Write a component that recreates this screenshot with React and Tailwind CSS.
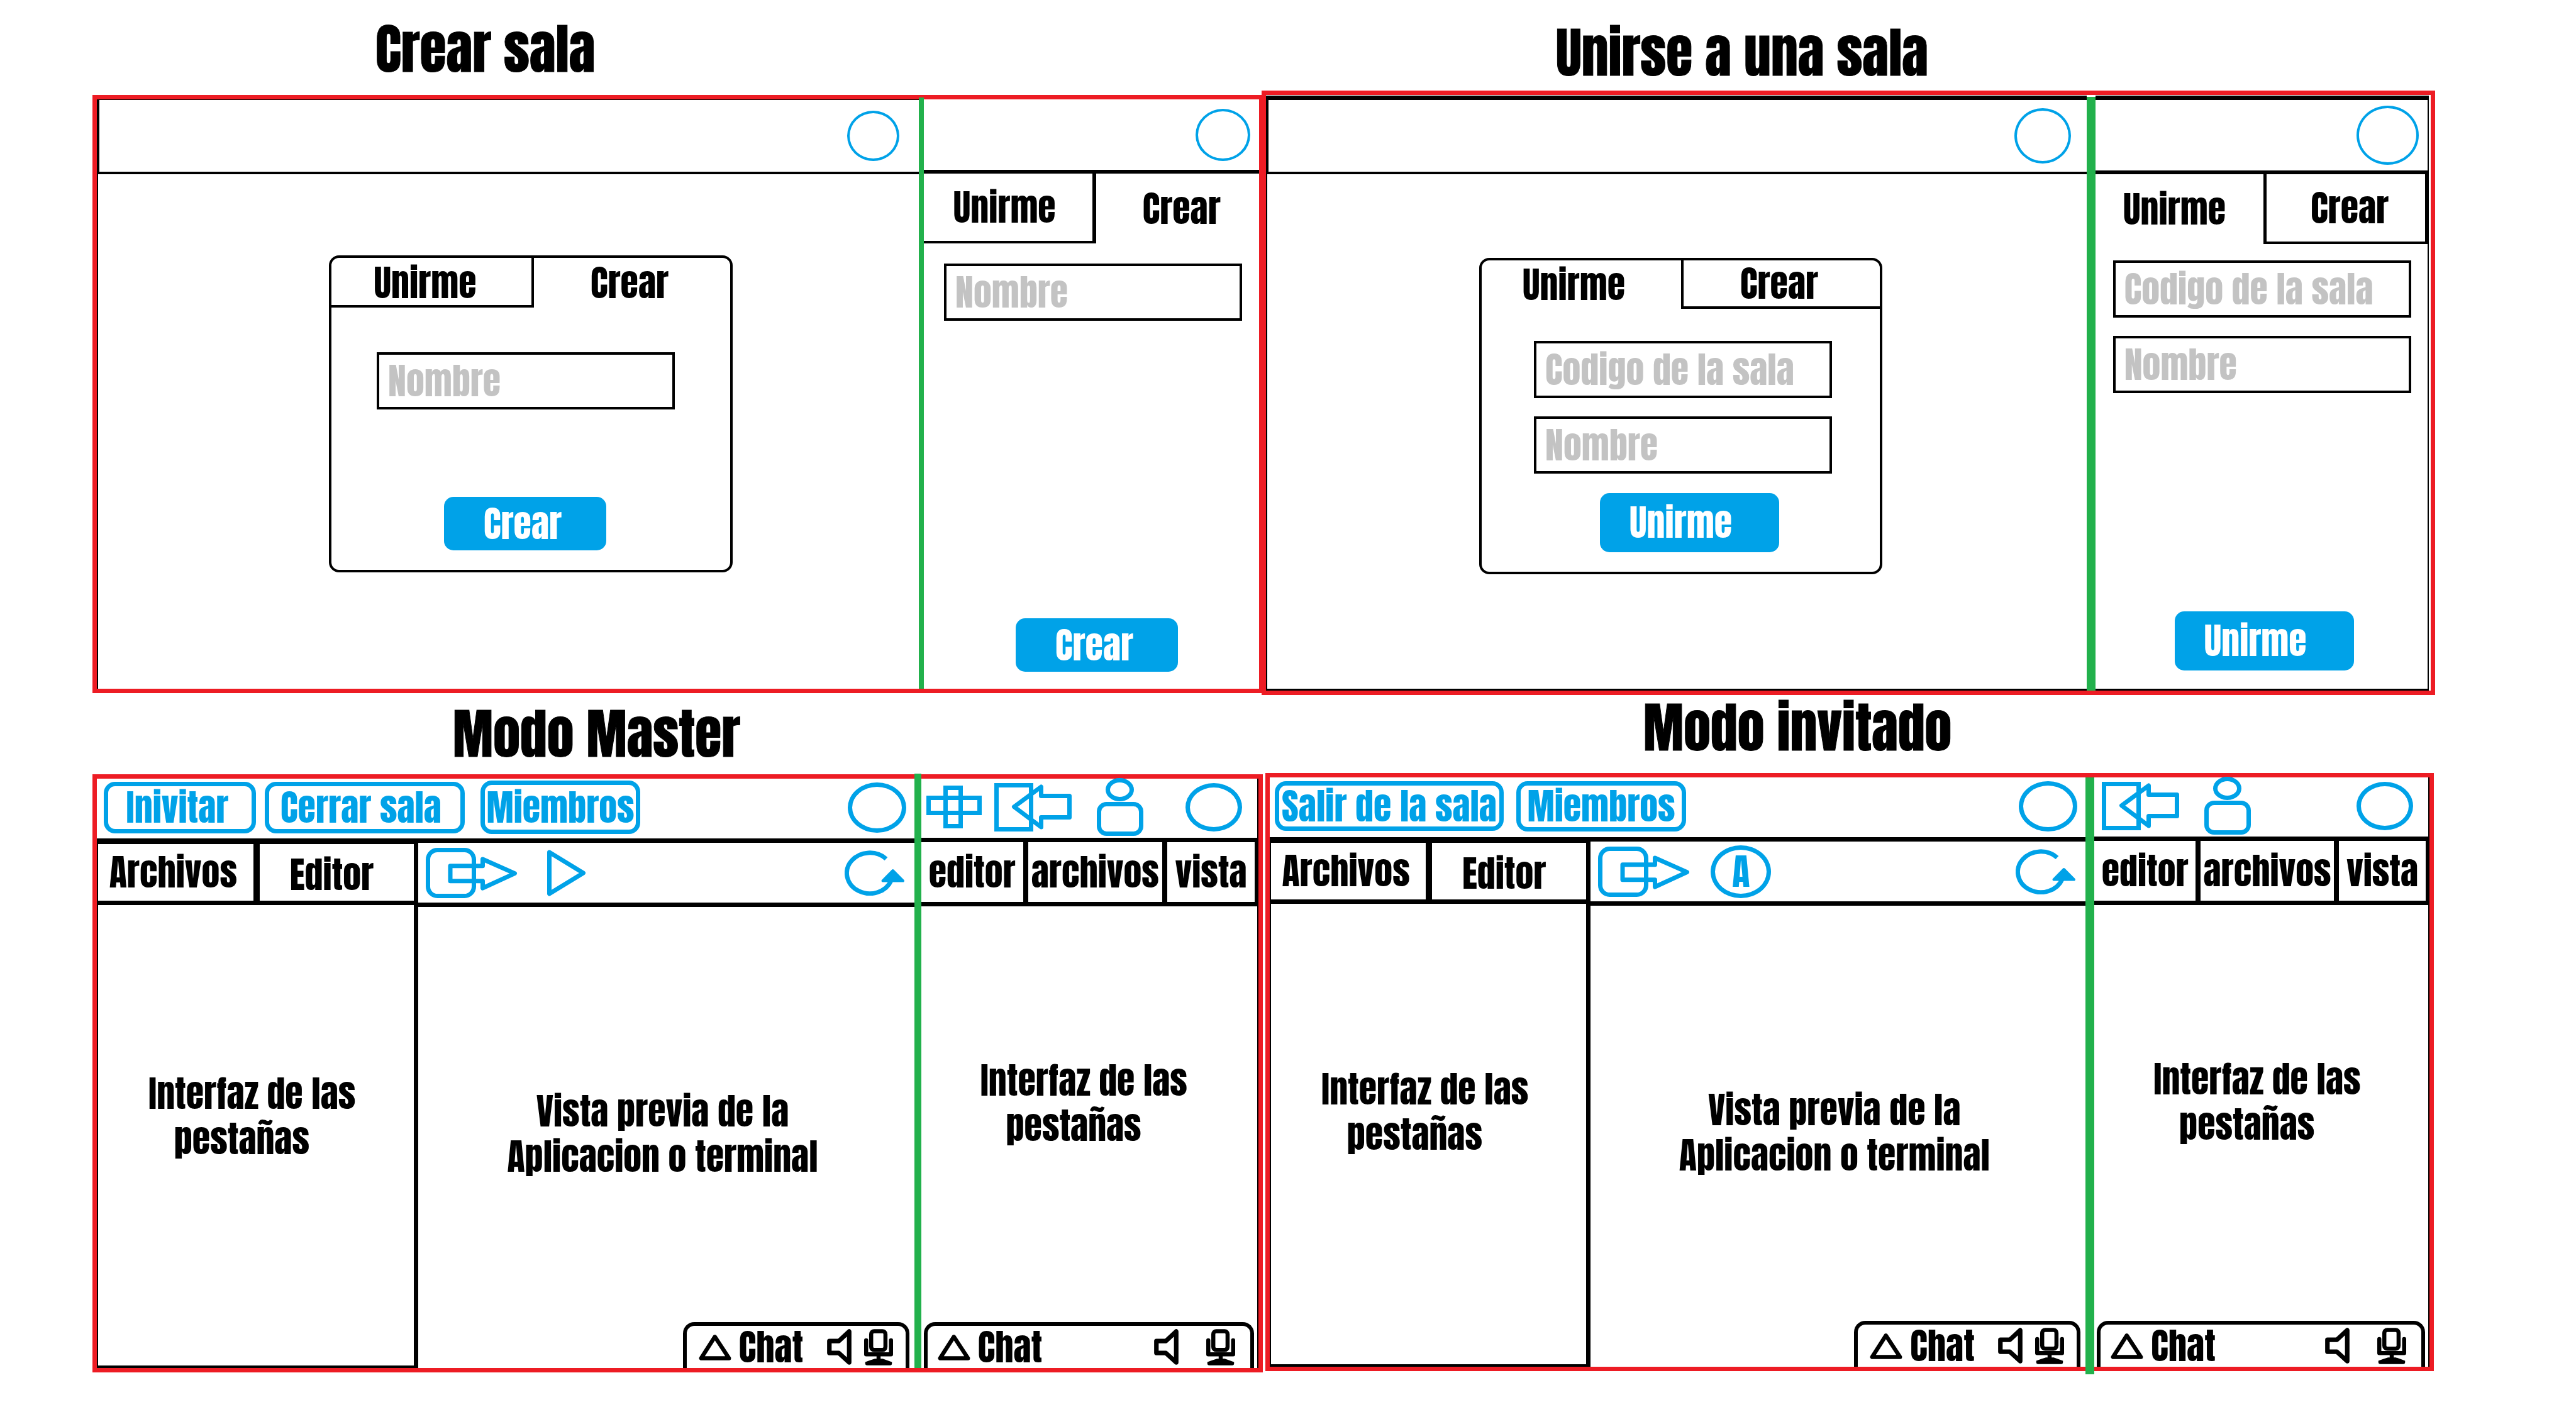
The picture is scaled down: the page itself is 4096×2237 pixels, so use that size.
const STROKE = { fill: 'none', stroke: 'currentColor', strokeWidth: 7, strokeLinejoin: 'round' };

function PlusIcon() {
  return (
    <svg viewBox="0 0 88 68" className="h-[68px] w-[88px]" {...STROKE} strokeLinejoin="miter" aria-hidden="true">
      <rect x="30.5" y="3.5" width="24" height="61" />
      <rect x="3.5" y="19.5" width="81" height="24" />
    </svg>
  );
}

function EnterIcon() {
  return (
    <svg viewBox="0 0 123 77" className="h-[77px] w-[123px]" {...STROKE} aria-hidden="true">
      <rect x="3.5" y="3.5" width="55" height="70" strokeLinejoin="miter" />
      <path d="M31.5 37.7L74.5 6V20.5H119.5V54.5H74.5V70Z" />
    </svg>
  );
}

function PersonIcon() {
  return (
    <svg viewBox="0 0 74 92" className="h-[92px] w-[74px]" {...STROKE} aria-hidden="true">
      <ellipse cx="36.5" cy="18.5" rx="19" ry="15" />
      <rect x="3.5" y="41.5" width="67" height="47" rx="12" />
    </svg>
  );
}

function ExportIcon() {
  return (
    <svg viewBox="0 0 146 80" className="h-[80px] w-[146px]" {...STROKE} aria-hidden="true">
      <rect x="3.5" y="3.5" width="73" height="73" rx="15" />
      <path d="M39 28.7H90.5V18L141.5 40.6L90.5 64V52.8H39Z" />
    </svg>
  );
}

function PlayIcon() {
  return (
    <svg viewBox="0 0 62 78" className="h-[78px] w-[62px]" {...STROKE} aria-hidden="true">
      <path d="M3.5 6L57.5 39L3.5 72Z" />
    </svg>
  );
}

function RefreshIcon() {
  return (
    <svg viewBox="0 0 96 72" className="h-[72px] w-[96px]" {...STROKE} aria-hidden="true">
      <path d="M66 13.5A36.5 32.4 0 1 0 74 48" />
      <path d="M76.7 32L93 48.5H60.5Z" fill="currentColor" strokeWidth="4" />
    </svg>
  );
}

function TriangleIcon() {
  return (
    <svg viewBox="0 0 176 141" className="h-[42px] w-[52px]" {...STROKE} strokeWidth="22" aria-hidden="true">
      <path d="M87 14L13 130H163Z" />
    </svg>
  );
}

function SpeakerIcon() {
  return (
    <svg viewBox="0 0 129 190" className="h-[57px] w-[39px]" {...STROKE} strokeWidth="24" aria-hidden="true">
      <path d="M12 64H62L117 13V177L62 127H12Z" />
    </svg>
  );
}

function MicIcon() {
  return (
    <svg viewBox="0 0 156 195" className="h-[58px] w-[46px]" {...STROKE} strokeWidth="22" aria-hidden="true">
      <rect x="38" y="11" width="77" height="101" rx="16" />
      <path d="M11 60V136H145V60" strokeLinecap="round" />
      <path d="M78 136V170" />
      <path
        d="M17 195H140Q150 195 150 184V177Q120 166 100 159H58Q35 166 6 177V184Q6 195 17 195Z"
        fill="currentColor"
        stroke="none"
      />
    </svg>
  );
}

function IconButton({ label, className = '', children }) {
  return (
    <button type="button" aria-label={label} className={`shrink-0 text-[#00a2e8] ${className}`}>
      {children}
    </button>
  );
}

function Avatar({ className }) {
  return <button type="button" aria-label="Perfil" className={`shrink-0 rounded-[50%] border-[#00a2e8] ${className}`} />;
}

function Tab({ className = '', children }) {
  return (
    <button type="button" role="tab" className={`flex min-w-0 items-center justify-center whitespace-nowrap border-black ${className}`}>
      {children}
    </button>
  );
}

function Field({ label, className = '' }) {
  return (
    <input
      type="text"
      aria-label={label}
      placeholder={label}
      className={`block h-[91px] w-[474px] border-4 border-black bg-white px-[14px] placeholder:text-[#c3c3c3] placeholder:opacity-100 ${className}`}
    />
  );
}

function Primary({ className = '', children }) {
  return (
    <button type="button" className={`block rounded-[15px] bg-[#00a2e8] text-white ${className}`}>
      {children}
    </button>
  );
}

function Outlined({ className = '', children }) {
  return (
    <button
      type="button"
      className={`flex shrink-0 items-center justify-center whitespace-nowrap rounded-[18px] border-[7px] border-[#00a2e8] text-[#00a2e8] ${className}`}
    >
      {children}
    </button>
  );
}

function Title({ className, children }) {
  return (
    <h2 className={`flex items-center text-[86px] leading-none [-webkit-text-stroke:1px_currentColor] ${className}`}>
      {children}
    </h2>
  );
}

function CreateRoom() {
  return (
    <section className="grid grid-cols-[1307fr_8px_533fr] border-[7px] border-r-4 border-[#ed1c24]">
      <div className="border-l-2 border-t border-black">
        <header className="flex h-[118px] items-center justify-end border-b-4 border-l-2 border-black pr-[31px]">
          <Avatar className="h-20 w-[83px] border-4" />
        </header>
        <form className="ml-[367px] mt-[129px] w-[642px] rounded-[16px] border-4 border-black pb-[31px]">
          <div role="tablist" className="flex h-[79px]">
            <Tab className="w-[322px] border-b-4 border-r-4 pr-5 pt-1">Unirme</Tab>
            <Tab className="flex-1 pr-2">Crear</Tab>
          </div>
          <Field label="Nombre" className="ml-[72px] mt-[71px]" />
          <Primary className="ml-[179px] mt-[139px] h-[85px] w-[258px] pr-2">Crear</Primary>
        </form>
      </div>
      <div className="-mt-[3px] bg-[#22b14c]" />
      <div className="flex flex-col">
        <header className="flex h-[118px] items-center justify-end border-b-[6px] border-black pr-[14px]">
          <Avatar className="h-[83px] w-[87px] border-4" />
        </header>
        <form className="flex flex-1 flex-col items-start pb-[27px]">
          <div role="tablist" className="flex h-[111px] w-full">
            <Tab className="flex-[258] border-b-4 border-r-[6px] pr-3">Unirme</Tab>
            <Tab className="flex-[248] pl-3">Crear</Tab>
          </div>
          <Field label="Nombre" className="ml-8 mt-8" />
          <Primary className="ml-[146px] mt-auto h-[85px] w-[258px] pr-2">Crear</Primary>
        </form>
      </div>
    </section>
  );
}

function JoinRoom() {
  return (
    <section className="grid grid-cols-[1304fr_14px_533fr] border-[7px] border-[#ed1c24]">
      <div className="mt-px border-b-[3px] border-l-2 border-t-[7px] border-black">
        <header className="flex h-[118px] items-center justify-end border-b-4 border-l-2 border-black pr-[25px]">
          <Avatar className="h-[88px] w-[90px] border-4" />
        </header>
        <form className="ml-[337px] mt-[133px] w-[641px] rounded-[16px] border-4 border-black pb-[31px]">
          <div role="tablist" className="flex h-[77px]">
            <Tab className="w-[317px] pr-6">Unirme</Tab>
            <Tab className="flex-1 border-b-4 border-l-4 pr-2">Crear</Tab>
          </div>
          <Field label="Codigo de la sala" className="ml-[83px] mt-[51px]" />
          <Field label="Nombre" className="ml-[83px] mt-[29px]" />
          <Primary className="ml-[188px] mt-[31px] h-[94px] w-[285px] pr-7">Unirme</Primary>
        </form>
      </div>
      <div className="mt-[3px] bg-[#22b14c]" />
      <div className="mr-[3px] mt-px flex flex-col border-b-[3px] border-r-2 border-t-[7px] border-black">
        <header className="flex h-[118px] items-center justify-end border-b-[6px] border-black pr-[14px]">
          <Avatar className="h-[94px] w-[99px] border-4" />
        </header>
        <form className="flex flex-1 flex-col items-start pb-[29px]">
          <div role="tablist" className="flex h-[111px] w-full">
            <Tab className="flex-[251] pr-4">Unirme</Tab>
            <Tab className="flex-[239] border-b-4 border-l-[5px] border-r-4 pl-3">Crear</Tab>
          </div>
          <Field label="Codigo de la sala" className="ml-7 mt-[26px]" />
          <Field label="Nombre" className="ml-7 mt-[29px]" />
          <Primary className="ml-[126px] mt-auto h-[94px] w-[285px] pr-7">Unirme</Primary>
        </form>
      </div>
    </section>
  );
}

function ChatBar({ className }) {
  return (
    <div className={`mt-auto flex h-[73px] items-center rounded-t-[18px] border-[6px] border-b-0 border-black ${className}`}>
      <button type="button" className="flex items-center gap-3">
        <TriangleIcon />
        Chat
      </button>
      <button type="button" aria-label="Sonido" className="ml-auto">
        <SpeakerIcon />
      </button>
      <button type="button" aria-label="Microfono">
        <MicIcon />
      </button>
    </div>
  );
}

function Workspace({ className, divider, actions, tools, mobileActions, asideText }) {
  return (
    <section className={`grid border-[7px] border-[#ed1c24] ${className}`}>
      <div className="flex flex-col">
        <header className="flex h-[95px] shrink-0 items-center pb-1 pr-[13px]">
          {actions}
          <Avatar className="ml-auto h-20 w-[93px] border-[7px]" />
        </header>
        <div className="grid flex-1 grid-cols-[511fr_788fr]">
          <aside className="flex flex-col border-b-4 border-l-2 border-r-[7px] border-black">
            <div role="tablist" className="flex h-[106px] border-b-[7px] border-t-[9px] border-black">
              <Tab className="flex-[238] border-r-[10px] pr-2">Archivos</Tab>
              <Tab className="flex-[229] pr-4 pt-2">Editor</Tab>
            </div>
            <p className={`whitespace-pre pl-[80px] leading-[72px] ${asideText}`}>{'Interfaz de las\n   pestañas'}</p>
          </aside>
          <main className="flex flex-col">
            <div className="flex h-[109px] shrink-0 items-center border-y-[7px] border-black pl-3 pr-[15px]">
              <IconButton label="Exportar">
                <ExportIcon />
              </IconButton>
              {tools}
              <IconButton label="Recargar" className="ml-auto">
                <RefreshIcon />
              </IconButton>
            </div>
            <p className="mt-[289px] pr-3 text-center leading-[72px]">
              Vista previa de la
              <br />
              Aplicacion o terminal
            </p>
            <ChatBar className="mr-2 w-[360px] gap-5 self-end pl-[19px] pr-5" />
          </main>
        </div>
      </div>
      <div className={`bg-[#22b14c] ${divider}`} />
      <div className="flex flex-col border-r-2 border-black">
        <header className="flex h-[94px] shrink-0 items-center pb-1 pr-6">
          {mobileActions}
          <Avatar className="ml-auto h-[77px] w-[90px] border-[7px]" />
        </header>
        <div role="tablist" className="flex h-[109px] border-y-[7px] border-r-4 border-black">
          <Tab className="flex-[162] border-r-8">editor</Tab>
          <Tab className="flex-[213] border-r-8">archivos</Tab>
          <Tab className="flex-[139]">vista</Tab>
        </div>
        <p className="mt-[241px] whitespace-pre pl-[94px] leading-[72px]">{'Interfaz de las\n   pestañas'}</p>
        <ChatBar className="ml-1 mr-[5px] gap-11 pl-4 pr-6" />
      </div>
    </section>
  );
}

export default function App() {
  return (
    <div className="grid min-h-screen grid-cols-[1859fr_1866fr] bg-white pl-[147px] pr-[224px] font-['Anton','Impact','Roboto_Condensed',sans-serif] text-[58px] font-normal leading-none text-black">
      <div className="grid grid-rows-[151px_951fr_129px_951fr_55px]">
        <Title className="pl-[450px] pt-1">Crear sala</Title>
        <CreateRoom />
        <Title className="pl-[573px]">Modo Master</Title>
        <Workspace
          className="-mr-[2px] grid-cols-[1299fr_11px_536fr]"
          divider="-mt-2"
          asideText="mt-[264px]"
          actions={
            <>
              <Outlined className="ml-[11px] h-[82px] w-[242px] pr-2">Inivitar</Outlined>
              <Outlined className="ml-[14px] h-[82px] w-[318px] pr-3">Cerrar sala</Outlined>
              <Outlined className="ml-[25px] h-[85px] w-[254px]">Miembros</Outlined>
            </>
          }
          tools={
            <IconButton label="Ejecutar" className="ml-[47px]">
              <PlayIcon />
            </IconButton>
          }
          mobileActions={
            <>
              <IconButton label="Invitar" className="ml-2">
                <PlusIcon />
              </IconButton>
              <IconButton label="Cerrar sala" className="ml-5">
                <EnterIcon />
              </IconButton>
              <IconButton label="Miembros" className="ml-10">
                <PersonIcon />
              </IconButton>
            </>
          }
        />
      </div>
      <div className="grid grid-rows-[144px_961fr_124px_951fr_57px]">
        <Title className="pl-[468px] pt-6">Unirse a una sala</Title>
        <JoinRoom />
        <Title className="pb-5 pl-[607px]">Modo invitado</Title>
        <Workspace
          className="ml-[6px] mr-[2px] grid-cols-[1298fr_14px_533fr]"
          divider="-mb-3"
          asideText="mt-[259px]"
          actions={
            <>
              <Outlined className="ml-2 h-[79px] w-[364px]">Salir de la sala</Outlined>
              <Outlined className="ml-5 h-20 w-[270px]">Miembros</Outlined>
            </>
          }
          tools={
            <button
              type="button"
              className="ml-[33px] flex h-[84px] w-24 items-center justify-center rounded-[50%] border-[7px] border-[#00a2e8] text-[#00a2e8]"
            >
              A
            </button>
          }
          mobileActions={
            <>
              <IconButton label="Salir de la sala" className="ml-3">
                <EnterIcon />
              </IconButton>
              <IconButton label="Miembros" className="ml-10">
                <PersonIcon />
              </IconButton>
            </>
          }
        />
      </div>
    </div>
  );
}
